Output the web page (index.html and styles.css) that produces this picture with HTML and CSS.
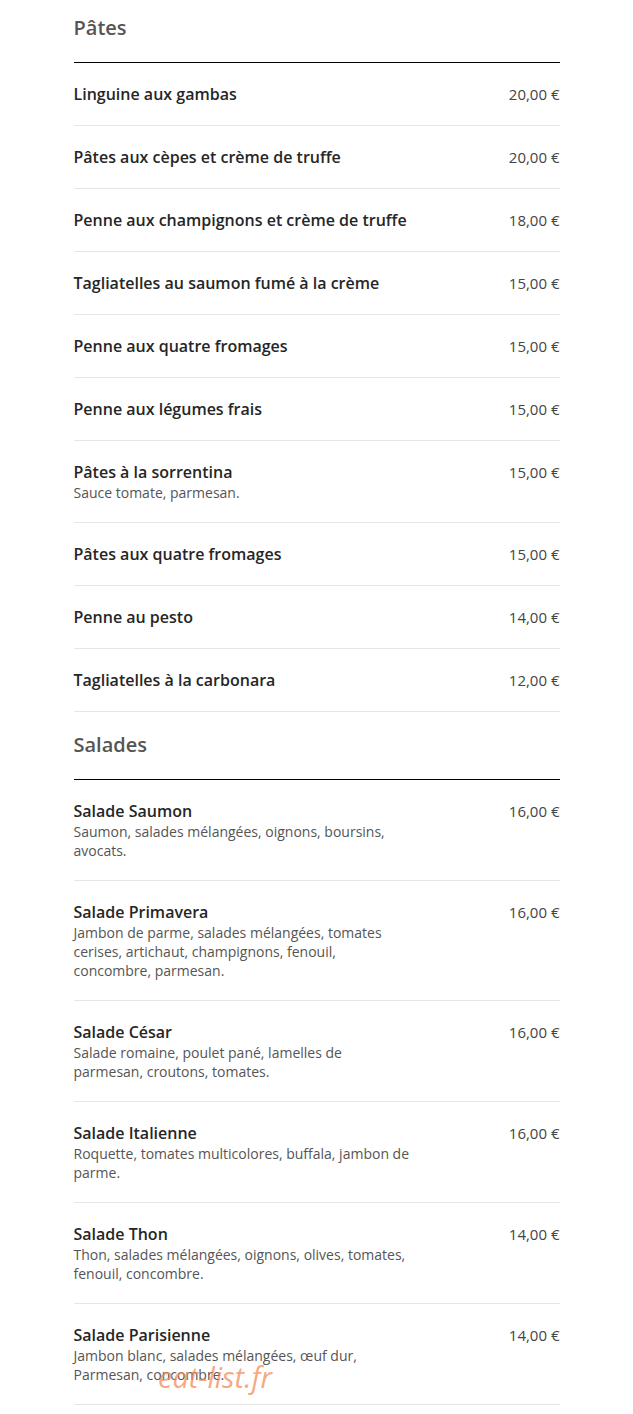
FILE: index.html
```html
<!DOCTYPE html>
<html lang="fr">
<head>
    <meta charset="UTF-8">
    <meta name="viewport" content="width=device-width, initial-scale=1.0">
    <title>Carte - Pâtes et Salades</title>
    <link rel="stylesheet" href="styles.css">
</head>
<body>

    <div class="menu">

        <div class="section">
            <h2 class="section-title">Pâtes</h2>

            <div class="item">
                <div class="item-info">
                    <div class="item-name">Linguine aux gambas</div>
                </div>
                <div class="item-price">20,00 €</div>
            </div>
            <div class="item">
                <div class="item-info">
                    <div class="item-name">Pâtes aux cèpes et crème de truffe</div>
                </div>
                <div class="item-price">20,00 €</div>
            </div>
            <div class="item">
                <div class="item-info">
                    <div class="item-name">Penne aux champignons et crème de truffe</div>
                </div>
                <div class="item-price">18,00 €</div>
            </div>
            <div class="item">
                <div class="item-info">
                    <div class="item-name">Tagliatelles au saumon fumé à la crème</div>
                </div>
                <div class="item-price">15,00 €</div>
            </div>
            <div class="item">
                <div class="item-info">
                    <div class="item-name">Penne aux quatre fromages</div>
                </div>
                <div class="item-price">15,00 €</div>
            </div>
            <div class="item">
                <div class="item-info">
                    <div class="item-name">Penne aux légumes frais</div>
                </div>
                <div class="item-price">15,00 €</div>
            </div>
            <div class="item">
                <div class="item-info">
                    <div class="item-name">Pâtes à la sorrentina</div>
                    <div class="item-desc">Sauce tomate, parmesan.</div>
                </div>
                <div class="item-price">15,00 €</div>
            </div>
            <div class="item">
                <div class="item-info">
                    <div class="item-name">Pâtes aux quatre fromages</div>
                </div>
                <div class="item-price">15,00 €</div>
            </div>
            <div class="item">
                <div class="item-info">
                    <div class="item-name">Penne au pesto</div>
                </div>
                <div class="item-price">14,00 €</div>
            </div>
            <div class="item">
                <div class="item-info">
                    <div class="item-name">Tagliatelles à la carbonara</div>
                </div>
                <div class="item-price">12,00 €</div>
            </div>
        </div>

        <div class="section">
            <h2 class="section-title">Salades</h2>

            <div class="item">
                <div class="item-info">
                    <div class="item-name">Salade Saumon</div>
                    <div class="item-desc">Saumon, salades mélangées, oignons, boursins, avocats.</div>
                </div>
                <div class="item-price">16,00 €</div>
            </div>
            <div class="item">
                <div class="item-info">
                    <div class="item-name">Salade Primavera</div>
                    <div class="item-desc">Jambon de parme, salades mélangées, tomates cerises, artichaut, champignons, fenouil, concombre, parmesan.</div>
                </div>
                <div class="item-price">16,00 €</div>
            </div>
            <div class="item">
                <div class="item-info">
                    <div class="item-name">Salade César</div>
                    <div class="item-desc">Salade romaine, poulet pané, lamelles de parmesan, croutons, tomates.</div>
                </div>
                <div class="item-price">16,00 €</div>
            </div>
            <div class="item">
                <div class="item-info">
                    <div class="item-name">Salade Italienne</div>
                    <div class="item-desc">Roquette, tomates multicolores, buffala, jambon de parme.</div>
                </div>
                <div class="item-price">16,00 €</div>
            </div>
            <div class="item">
                <div class="item-info">
                    <div class="item-name">Salade Thon</div>
                    <div class="item-desc">Thon, salades mélangées, oignons, olives, tomates, fenouil, concombre.</div>
                </div>
                <div class="item-price">14,00 €</div>
            </div>
            <div class="item">
                <div class="item-info">
                    <div class="item-name">Salade Parisienne</div>
                    <div class="item-desc">Jambon blanc, salades mélangées, œuf dur, Parmesan, concombre.</div>
                </div>
                <div class="item-price">14,00 €</div>
            </div>
        </div>

    </div>

    <div class="watermark">eat-list.fr</div>

</body>
</html>
```

FILE: styles.css
```css
body {
    font-family: "Open Sans", "Liberation Sans", sans-serif;
    background-color: #FFFFFF;
    color: #222222;
    margin: 0;
    padding: 0;
    position: relative;
}

.menu {
    width: 486px;
    margin: 0 auto;
    padding-top: 14px;
}

.section + .section {
    margin-top: 19px;
}

.section-title {
    font-size: 20px;
    font-weight: 600;
    line-height: 28px;
    color: #555555;
    margin: 0;
    padding-bottom: 20px;
    border-bottom: 1px solid #000000;
}

.item {
    display: flex;
    justify-content: space-between;
    align-items: flex-start;
    padding: 20px 0;
    border-bottom: 1px solid #e6e6e6;
}

.item-info {
    width: 340px;
}

.item-name {
    font-size: 16px;
    font-weight: 600;
    line-height: 22px;
    color: #262626;
}

.item-desc {
    font-size: 14px;
    line-height: 19px;
    color: #555555;
}

.item-price {
    font-size: 15px;
    line-height: 22px;
    color: #444444;
    white-space: nowrap;
}

/* filigrane du site */
.watermark {
    position: absolute;
    left: 158px;
    top: 1357px;
    font-size: 29px;
    font-style: italic;
    color: rgba(244, 140, 90, 0.75);
    pointer-events: none;
}
```
